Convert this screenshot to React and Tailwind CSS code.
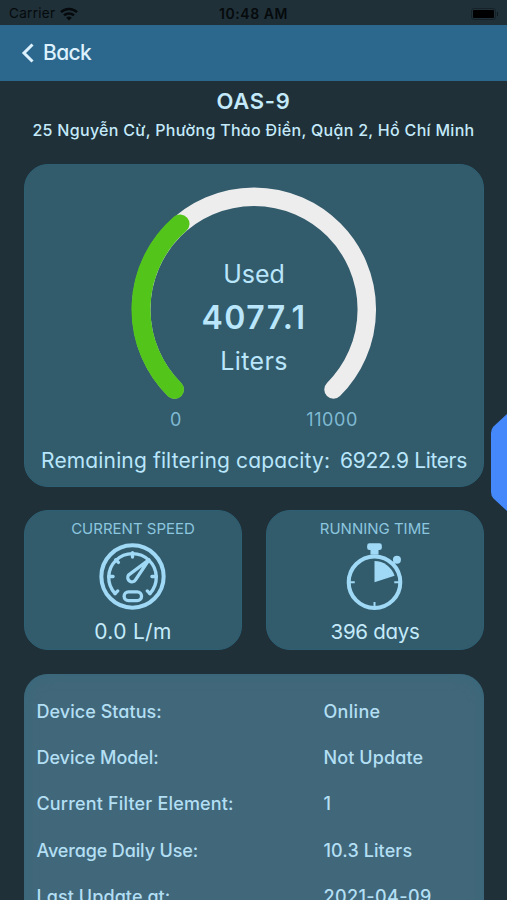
import { clsx } from 'clsx';

const details = [
  { label: 'Device Status:', value: 'Online', labelClass: 'tracking-[0.04px]', valueClass: 'tracking-[0.3px]' },
  { label: 'Device Model:', value: 'Not Update', labelClass: 'tracking-[-0.05px]', valueClass: 'tracking-[0.1px]' },
  { label: 'Current Filter Element:', value: '1', labelClass: 'tracking-[0.17px]' },
  { label: 'Average Daily Use:', value: '10.3 Liters', labelClass: 'tracking-[-0.13px]', valueClass: 'tracking-[0.1px]' },
  { label: 'Last Update at:', value: '2021-04-09', labelClass: 'tracking-[0.08px]', valueClass: 'tracking-[0.4px]' },
];

function StatusBar() {
  return (
    <div className="flex h-[25px] shrink-0 items-center px-[9px] pt-[2px] text-[13px] text-[#060a0c]">
      <div className="flex flex-1 items-center gap-[5px]">
        <span className="text-[13.5px] tracking-[0.3px]">Carrier</span>
        <svg width="18" height="14" viewBox="0 0 18 14" fill="none" stroke="currentColor" strokeWidth="2.5">
          <path d="M1 5.2a11.4 11.4 0 0 1 16 0" />
          <path d="M4 8.4a7.2 7.2 0 0 1 10 0" />
          <path d="M9 13.6 6.2 10.8a4 4 0 0 1 5.6 0Z" fill="currentColor" stroke="none" />
        </svg>
      </div>
      <span className="text-[14px] font-semibold tracking-[0.55px]">10:48 AM</span>
      <div className="flex flex-1 items-center justify-end">
        <div className="h-[12px] w-[25px] rounded-[3px] border border-[#162227] p-px">
          <div className="h-full w-full rounded-[1px] bg-black" />
        </div>
        <div className="ml-px h-1 w-px bg-[#10191d]" />
      </div>
    </div>
  );
}

function Gauge() {
  return (
    <div className="relative h-[214px] w-[246px]">
      <svg width="246" height="214" viewBox="0 0 246 214" fill="none" strokeWidth="18.5" strokeLinecap="round">
        <path d="M43.5 203.5A112.8 112.8 0 1 1 202.5 203.5" stroke="#ededed" />
        <path d="M43.5 203.5A112.8 112.8 0 0 1 49 37.9" stroke="#52c41a" strokeWidth="19" />
      </svg>
      <div className="absolute inset-x-0 top-[67px] flex flex-col items-center text-[#b9e6fb]">
        <span className="text-[25px] leading-[43px]">Used</span>
        <span className="text-[32px] leading-[44px] font-semibold tracking-[1.5px]">4077.1</span>
        <span className="text-[25px] leading-[43px] tracking-[0.4px]">Liters</span>
      </div>
    </div>
  );
}

function SpeedIcon() {
  return (
    <svg width="67" height="67" viewBox="0 0 200 200" fill="none" stroke="#a0d9f6" strokeWidth="10" strokeLinecap="round" strokeLinejoin="round">
      <circle cx="100" cy="100" r="93" strokeWidth="12" />
      <path d="M48 151A71 71 0 1 1 152 151" />
      <path d="M48 151l8-8M152 151l-8-8M29 100h13M171 100h-13M100 29v13M50 50l8 8" />
      <path d="M88 96L149 50L109 110A12 12 0 1 1 88 96Z" />
      <rect x="75" y="146" width="52" height="26" rx="13" />
    </svg>
  );
}

function StopwatchIcon() {
  return (
    <svg width="67" height="67" viewBox="0 0 200 200" fill="none" stroke="#a0d9f6">
      <circle cx="100" cy="117" r="77" strokeWidth="12" />
      <rect x="78" y="1" width="44" height="20" rx="7" fill="#a0d9f6" stroke="none" />
      <path d="M88 20h24v15h-24z" fill="#a0d9f6" stroke="none" />
      <circle cx="167" cy="50" r="12" fill="#a0d9f6" stroke="none" />
      <path d="M155 62l8-8" strokeWidth="7" />
      <path d="M100 117V54A63 63 0 0 1 160 98Z" fill="#a0d9f6" stroke="none" />
      <path d="M27 117h14M173 117h-14M100 190v-14" strokeWidth="6" />
    </svg>
  );
}

function StatCard({ title, value, icon, valueClass }) {
  return (
    <div className="flex h-[140px] flex-1 flex-col items-center rounded-[24px] border border-[#2e6074] bg-[#325b6c] pt-[8px]">
      <h2 className="text-[15px] leading-5 text-[#8cc6df]">{title}</h2>
      <div className="mt-[4px] mr-px">{icon}</div>
      <p className={clsx('mt-[7px] leading-[30px] text-[#c4eafa]', valueClass)}>{value}</p>
    </div>
  );
}

export default function App() {
  return (
    <div className="relative flex h-[900px] w-[507px] flex-col overflow-hidden bg-[#1f3038] font-['Inter',sans-serif] [font-feature-settings:'cv11']">
      <div className="[font-feature-settings:normal]">
        <StatusBar />
      </div>
      <header className="flex h-[56px] shrink-0 items-center bg-[#2c688d] pl-[21px] text-[#dcf1fd]">
        <svg width="13" height="20" viewBox="0 0 13 20" fill="none" stroke="currentColor" strokeWidth="3">
          <path d="M11.5 1.5L3 10L11.5 18.5" />
        </svg>
        <span className="ml-[9px] text-[21px] font-medium tracking-[-0.6px]">Back</span>
      </header>

      <div className="flex flex-col items-center pt-[6px] text-[#c4eafa]">
        <h1 className="text-[22px] leading-[28px] font-semibold tracking-[0.7px]">OAS-9</h1>
        <p className="mt-[3px] text-[16px] leading-[24px] font-medium tracking-[0.3px] whitespace-nowrap">
          25 Nguyễn Cừ, Phường Thảo Điền, Quận 2, Hồ Chí Minh
        </p>
      </div>

      <main className="flex flex-col px-[24px] pt-[22px]">
        <section className="flex h-[323px] w-[460px] flex-col items-center rounded-[24px] border border-[#2e6074] bg-[#325b6c] pt-[21px]">
          <Gauge />
          <div className="mt-[8px] flex w-full justify-between pr-[125px] pl-[145px] text-[18px] leading-6 text-[#7fbad3]">
            <span>0</span>
            <span className="tracking-[0.6px]">11000</span>
          </div>
          <p className="mt-[14px] flex gap-[10px] text-[21px] leading-[30px] whitespace-nowrap text-[#b9e6fb]">
            <span className="tracking-[0.14px]">Remaining filtering capacity:</span>
            <span className="tracking-[-0.35px]">6922.9 Liters</span>
          </p>
        </section>

        <section className="mt-[23px] flex w-[460px] gap-[24px]">
          <StatCard title="CURRENT SPEED" value="0.0 L/m" icon={<SpeedIcon />} valueClass="text-[21px] tracking-[0.3px]" />
          <StatCard title="RUNNING TIME" value="396 days" icon={<StopwatchIcon />} valueClass="text-[20.5px] tracking-[-0.3px]" />
        </section>

        <section className="mt-[24px] h-[300px] w-[460px] rounded-t-[24px] bg-[#41687a] px-[12.5px] pt-[14px] text-[#b3dff4] shadow-[inset_0_0_14px_#37677b]">
          {details.map((item) => (
            <div key={item.label} className="flex h-[46.4px] items-center text-[18px] font-medium">
              <span className={clsx('w-[287px]', item.labelClass)}>{item.label}</span>
              <span className={item.valueClass}>{item.value}</span>
            </div>
          ))}
        </section>
      </main>

      <svg className="absolute top-[412px] right-0" width="17" height="101" viewBox="0 0 17 101">
        <path d="M17 2L3.5 14.5Q1 17 1 21V80Q1 84 3.5 86.5L17 99Z" fill="#4488fb" />
      </svg>
    </div>
  );
}
